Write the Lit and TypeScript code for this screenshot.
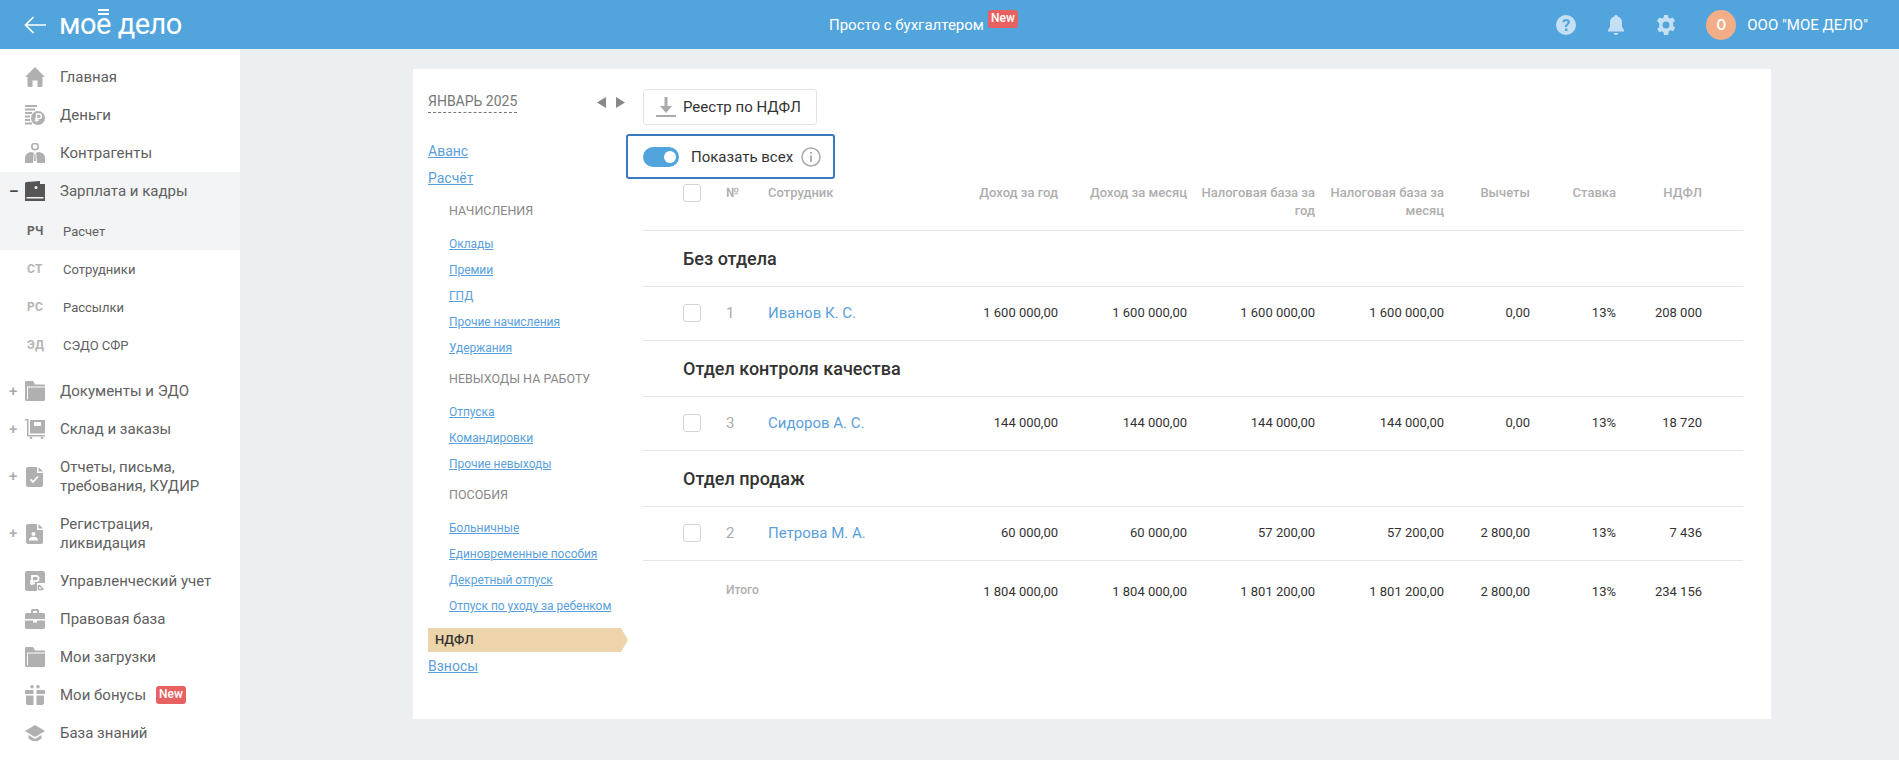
import { LitElement, html, css, svg } from 'lit';
import { customElement } from 'lit/decorators.js';

const ICONS: Record<string, unknown> = {
  home: svg`<path d="M10 0 L20 10 H17.5 V18.5 Q17.5 20 16 20 H12.5 V13.5 H7.5 V20 H4 Q2.5 20 2.5 18.5 V10 H0 Z"/>`,
  money: svg`<path d="M0 0h12v2H0zM0 3.5h10v2H0zM0 7h7v2H0zM0 10.5h5v2H0zM0 14h5v2H0zM0 17.5h7v2H0z"/><circle cx="13" cy="13" r="7"/><path d="M11.5 17v-8h2.6a2.2 2.2 0 0 1 0 4.500h-4M9.700 15.300h4" fill="none" stroke="#fff" stroke-width="1.4"/>`,
  person: svg`<circle cx="10" cy="3.600" r="3.200" fill="none" stroke="currentColor" stroke-width="1.600"/><path d="M0 20v-5q0-5 6-6l4 1 4-1q6 1 6 6v5z"/><path d="M8.800 10h2.400l.8 10H8z" fill="#fff"/><path d="M9.500 11h1l.4 7h-1.800z"/>`,
  wallet: svg`<path d="M1.500 1 L15 0 V3 H20 V20 H0 V2.500 Q0 1 1.500 1z M1.500 16v1.500h17V16z" fill-rule="evenodd"/><circle cx="11" cy="6.500" r="1.500" fill="#f3f4f5"/>`,
  folder: svg`<path d="M1 0 H8 L10 3.500 H19 Q20 3.500 20 4.500 V18.500 Q20 20 18.500 20 H1.500 Q0 20 0 18.500 V1 Q0 0 1 0z M2 5.500 V18.300 H3 V6.500 H20 V5.500z" fill-rule="evenodd"/>`,
  cart: svg`<path d="M0 0h3.500v16H20v1.500H2V1.500H0z"/><path d="M5 1h15v13.500H5zM9 3v4h7V3z" fill-rule="evenodd"/><circle cx="6" cy="19" r="1.300"/><circle cx="17" cy="19" r="1.300"/>`,
  doccheck: svg`<path d="M3 0 H12 V6 H18 V18 Q18 20 16 20 H3 Q1 20 1 18 V2 Q1 0 3 0z M13.500 0 L18 4.500 H13.500z" fill-rule="evenodd"/><path d="M5.500 12.500l2.500 2.500 5-5.500" fill="none" stroke="#fff" stroke-width="1.800"/>`,
  docperson: svg`<path d="M3 0 H12 V6 H18 V18 Q18 20 16 20 H3 Q1 20 1 18 V2 Q1 0 3 0z M13.500 0 L18 4.500 H13.500z" fill-rule="evenodd"/><circle cx="8.500" cy="10" r="2" fill="#fff"/><path d="M4 16.500q0-3.800 4.500-3.800t4.500 3.800z" fill="#fff"/>`,
  ruble: svg`<path d="M2 0 H18 Q20 0 20 2 V20 H2 Q0 20 0 18 V2 Q0 0 2 0z"/><path d="M7 14V5h4a2.500 2.500 0 0 1 0 5.200H5M5 12.300h5" fill="none" stroke="#fff" stroke-width="1.800"/><path d="M12 12h8v8h-8z" fill="#fff"/><path d="M14 13.500h4.500V18M18 18 L13.500 13.500" transform="rotate(180 16 16)" fill="none" stroke="#b0b0b0" stroke-width="1.500"/>`,
  case: svg`<path d="M6 4V1.500Q6 0 7.500 0h5Q14 0 14 1.500V4h4.500Q20 4 20 5.500V10H0V5.500Q0 4 1.500 4zM8 2v2h4V2z" fill-rule="evenodd"/><path d="M0 11.500h8v2h4v-2h8v7q0 1.500-1.500 1.500h-17Q0 20 0 18.500z"/>`,
  gift: svg`<circle cx="7" cy="1.800" r="1.800"/><circle cx="13" cy="1.800" r="1.800"/><path d="M1 5h7.500v4H0V6q0-1 1-1zM11.500 5H19q1 0 1 1v3h-8.500zM1 10.500h7.500V20H3q-2 0-2-2zM11.500 10.500H19V18q0 2-2 2h-5.500z"/>`,
  cap: svg`<path d="M10 2 L20 8 L10 14 L0 8z"/><path d="M3.500 12 L10 16 L16.500 12 V15.500 Q10 21 3.500 15.500z"/>`,
};

const MENU_TOP = [
  { icon: 'home', label: 'Главная' },
  { icon: 'money', label: 'Деньги' },
  { icon: 'person', label: 'Контрагенты' },
];
const MENU_BOTTOM = [
  { icon: 'folder', label: 'Документы и ЭДО', mark: '+' },
  { icon: 'cart', label: 'Склад и заказы', mark: '+' },
  { icon: 'doccheck', label: 'Отчеты, письма, требования, КУДИР', mark: '+', tall: true },
  { icon: 'docperson', label: 'Регистрация, ликвидация', mark: '+', tall: true },
  { icon: 'ruble', label: 'Управленческий учет' },
  { icon: 'case', label: 'Правовая база' },
  { icon: 'folder', label: 'Мои загрузки' },
  { icon: 'gift', label: 'Мои бонусы', badge: true },
  { icon: 'cap', label: 'База знаний' },
];
const SUBMENU = [
  { abbr: 'СТ', label: 'Сотрудники' },
  { abbr: 'РС', label: 'Рассылки' },
  { abbr: 'ЭД', label: 'СЭДО СФР' },
];
const SECTIONS = [
  { title: 'НАЧИСЛЕНИЯ', links: ['Оклады', 'Премии', 'ГПД', 'Прочие начисления', 'Удержания'] },
  { title: 'НЕВЫХОДЫ НА РАБОТУ', links: ['Отпуска', 'Командировки', 'Прочие невыходы'] },
  { title: 'ПОСОБИЯ', links: ['Больничные', 'Единовременные пособия', 'Декретный отпуск', 'Отпуск по уходу за ребенком'] },
];
const COLUMNS = ['Доход за год', 'Доход за месяц', 'Налоговая база за год', 'Налоговая база за месяц', 'Вычеты', 'Ставка', 'НДФЛ'];
const GROUPS = [
  { title: 'Без отдела', num: '1', name: 'Иванов К. С.', values: ['1 600 000,00', '1 600 000,00', '1 600 000,00', '1 600 000,00', '0,00', '13%', '208 000'] },
  { title: 'Отдел контроля качества', num: '3', name: 'Сидоров А. С.', values: ['144 000,00', '144 000,00', '144 000,00', '144 000,00', '0,00', '13%', '18 720'] },
  { title: 'Отдел продаж', num: '2', name: 'Петрова М. А.', values: ['60 000,00', '60 000,00', '57 200,00', '57 200,00', '2 800,00', '13%', '7 436'] },
];
const TOTALS = ['1 804 000,00', '1 804 000,00', '1 801 200,00', '1 801 200,00', '2 800,00', '13%', '234 156'];

@customElement('app-root')
export class AppRoot extends LitElement {
  static styles = css`
    :host {
      display: block;
      height: 760px;
      overflow: hidden;
      background: #ebeff2;
      font-family: Roboto, "Liberation Sans", sans-serif;
      color: #555;
      --cols: 40px 43px 42px 161px 129px 129px 128px 129px 86px 86px 86px 41px;
    }
    a { color: #5a9fdc; text-decoration: underline; }

    .top {
      display: flex;
      align-items: center;
      height: 49px;
      background: #52a5dc;
      color: #fff;
    }
    .top-left {
      display: flex;
      align-items: center;
      width: 829px;
      padding-left: 24px;
      box-sizing: border-box;
    }
    .back { width: 22px; height: 18px; margin-right: 13px; }
    .logo {
      font-size: 29px;
      line-height: 49px;
      height: 49px;
      letter-spacing: -0.5px;
      white-space: nowrap;
    }
    .logo-e { position: relative; }
    .logo-e::before {
      content: '';
      position: absolute;
      left: 2px;
      right: 2px;
      top: 2px;
      height: 2px;
      border-top: 2px solid #fff;
      border-bottom: 2px solid #fff;
    }
    .promo { position: relative; font-size: 15px; color: #fff; }
    .new {
      display: inline-block;
      padding: 0 3px;
      height: 18px;
      line-height: 17px;
      border-radius: 3px;
      background: #e86161;
      color: #fff;
      font-size: 12px;
      font-weight: 500;
    }
    .promo .new { position: absolute; left: 159px; top: -6px; }
    .top-right {
      display: flex;
      align-items: center;
      margin-left: auto;
      padding-right: 31px;
    }
    .top-icon { width: 20px; height: 20px; margin-right: 30px; fill: #c5e0f5; display: block; }
    .avatar {
      width: 30px;
      height: 30px;
      border-radius: 50%;
      background: #f4ae87;
      color: #fff;
      font-size: 14px;
      font-weight: 500;
      display: flex;
      align-items: center;
      justify-content: center;
      margin-right: 11px;
    }
    .company { font-size: 15px; color: #fff; }

    .body { display: flex; height: 711px; }
    .side {
      width: 240px;
      flex: none;
      background: #fff;
      padding-top: 9px;
      box-sizing: border-box;
      font-size: 15px;
      line-height: 19px;
      color: #606060;
      overflow: hidden;
    }
    .item {
      display: flex;
      align-items: center;
      height: 38px;
    }
    .item.tall { height: 57px; }
    .item.active { background: #f3f4f5; height: 40px; padding-bottom: 2px; box-sizing: border-box; }
    .mark {
      width: 25px;
      flex: none;
      padding-left: 9px;
      box-sizing: border-box;
      font-size: 15px;
      font-weight: 500;
      color: #aaa;
    }
    .active .mark { color: #444; font-weight: 700; }
    .icon { width: 20px; height: 20px; flex: none; fill: #b0b0b0; color: #b0b0b0; margin-right: 15px; }
    .active .icon { fill: #555; color: #555; }
    .label { max-width: 175px; }
    .item .new { margin-left: 10px; }
    .sub {
      display: flex;
      align-items: center;
      height: 38px;
      font-size: 13px;
      padding-left: 27px;
    }
    .sub.current { background: #f3f4f5; }
    .abbr { width: 36px; flex: none; font-size: 12px; font-weight: 700; color: #b5b5b5; letter-spacing: 0.3px; }
    .current .abbr { color: #666; }
    .subs { margin-bottom: 8px; }

    .main { flex: 1; padding: 20px 0 0 173px; }
    .card {
      display: flex;
      width: 1358px;
      height: 650px;
      background: #fff;
      box-sizing: border-box;
      padding: 20px 0 0 15px;
    }
    .nav { width: 215px; flex: none; font-size: 14px; line-height: 20px; }
    .month-row {
      display: flex;
      align-items: center;
      justify-content: space-between;
      width: 197px;
      height: 26px;
      margin-bottom: 26px;
    }
    .month { color: #777; border-bottom: 1px dashed #777; line-height: 20px; height: 21px; }
    .arrows { display: flex; gap: 10px; }
    .arrows svg { width: 9px; height: 11px; fill: #888; display: block; }
    .nav-link { display: block; width: max-content; margin-bottom: 7px; }
    .section-title { font-size: 12.5px; color: #888; margin: 12px 0 14px 21px; }
    .nav-link + .section-title { margin-top: 13px; }
    .section-links { display: flex; flex-direction: column; gap: 8px; margin-left: 21px; font-size: 12px; line-height: 18px; letter-spacing: -0.05px; }
    .section-links a { width: max-content; }
    .nav-current {
      width: 200px;
      height: 24px;
      margin: 13px 0 4px;
      padding-left: 7px;
      box-sizing: border-box;
      background: #edd4aa;
      color: #333;
      font-size: 13px;
      font-weight: 500;
      line-height: 23px;
      clip-path: polygon(0 0, 193px 0, 100% 50%, 193px 100%, 0 100%);
    }

    .content { width: 1100px; flex: none; }
    .export {
      display: flex;
      align-items: center;
      width: 174px;
      height: 36px;
      box-sizing: border-box;
      border: 1px solid #e2e2e2;
      border-radius: 3px;
      padding-left: 12px;
      font-size: 15px;
      color: #333;
    }
    .export svg { width: 20px; height: 20px; fill: #aaa; margin-right: 7px; }
    .toggle-box {
      display: flex;
      align-items: center;
      width: 209px;
      height: 45px;
      margin: 9px 0 0 -17px;
      padding-left: 15px;
      box-sizing: border-box;
      border: 2px solid #3a7abd;
      border-radius: 3px;
      font-size: 15px;
      color: #333;
    }
    .toggle {
      width: 36px;
      height: 20px;
      border-radius: 10px;
      background: #52a5dc;
      display: flex;
      align-items: center;
      justify-content: flex-end;
      padding-right: 3px;
      box-sizing: border-box;
      margin-right: 12px;
    }
    .toggle i { width: 12px; height: 12px; border-radius: 50%; background: #fff; }
    .info { width: 20px; height: 20px; margin-left: 8px; }

    .row {
      display: grid;
      grid-template-columns: var(--cols);
      align-items: center;
      border-bottom: 1px solid #e5e5e5;
      box-sizing: border-box;
    }
    .check {
      grid-column: 2;
      width: 18px;
      height: 18px;
      box-sizing: border-box;
      border: 1px solid #d5d5d5;
      border-radius: 3px;
    }
    .head {
      height: 52px;
      align-items: start;
      padding-top: 5px;
      font-size: 13px;
      font-weight: 500;
      line-height: 18px;
      color: #aeaeae;
    }
    .right { text-align: right; }
    .head .right { padding-left: 12px; }
    .group {
      height: 56px;
      display: flex;
      align-items: center;
      padding-left: 40px;
      border-bottom: 1px solid #e5e5e5;
      box-sizing: border-box;
      font-size: 18px;
      font-weight: 500;
      color: #333;
    }
    .data { height: 54px; padding-bottom: 2px; font-size: 13px; color: #333; }
    .num { font-size: 15px; color: #aaa; }
    .name { font-size: 15px; color: #5a9fdc; }
    .total { height: 60px; align-items: start; font-size: 13px; color: #333; border-bottom: none; padding-top: 23px; }
    .total-label { grid-column: 3 / 5; font-size: 12px; font-weight: 500; color: #aeaeae; margin-top: -1px; }
  `;

  private renderItem(m: { icon: string; label: string; mark?: string; tall?: boolean; badge?: boolean }) {
    return html`
      <div class="item ${m.tall ? 'tall' : ''}">
        <span class="mark">${m.mark ?? ''}</span>
        <svg class="icon" viewBox="0 0 20 20">${ICONS[m.icon]}</svg>
        <span class="label">${m.label}</span>
        ${m.badge ? html`<span class="new">New</span>` : ''}
      </div>
    `;
  }

  private renderTop() {
    return html`
      <header class="top">
        <div class="top-left">
          <svg class="back" viewBox="0 0 22 18" fill="none" stroke="#fff" stroke-width="1.6"><path d="M22 9H1.5M9.5 1 1.5 9l8 8"/></svg>
          <div class="logo">мо<span class="logo-e">е</span> дело</div>
        </div>
        <div class="promo">Просто с бухгалтером<span class="new">New</span></div>
        <div class="top-right">
          <svg class="top-icon" viewBox="0 0 20 20"><path fill-rule="evenodd" d="M10 0a10 10 0 1 1 0 20 10 10 0 0 1 0-20zM9 13.500v2.500h2.400v-2.500zM10.200 4C8 4 6.500 5.200 6.300 7.300h2.300c.1-.9.700-1.400 1.500-1.400s1.400.5 1.400 1.300c0 1.600-2.700 1.800-2.700 4.900h2.300c0-2.400 2.800-2.600 2.800-5.100C13.900 5.200 12.400 4 10.200 4z"/></svg>
          <svg class="top-icon" viewBox="0 0 20 20"><path d="M10 0c1 0 1.500.6 1.600 1.400C14.500 2.200 16 4.500 16 7.500V12l2 3v1.500H2V15l2-3V7.500c0-3 1.500-5.300 4.400-6.100C8.500.6 9 0 10 0zM7.500 18h5c-.3 1.200-1.300 2-2.500 2s-2.200-.8-2.500-2z"/></svg>
          <svg class="top-icon" viewBox="0 0 20 20"><path fill-rule="evenodd" d="M8 0h4l.5 2.800 1.600.8L16.700 2.500l2.300 3.300-2.100 1.900.2 1.300.2 1-.2 1 2.100 1.800-2 3.500-2.700-1-1.600 1L12 20H8l-.5-2.700-1.600-1-2.700 1-2-3.500 2.100-1.800-.2-1 .2-2.300L1 5.800l2.300-3.300 2.600 1.100 1.600-.8zM10 6.500a3.500 3.500 0 1 0 0 7 3.500 3.500 0 0 0 0-7z"/></svg>
          <div class="avatar">О</div>
          <div class="company">ООО "МОЕ ДЕЛО"</div>
        </div>
      </header>
    `;
  }

  private renderSide() {
    return html`
      <aside class="side">
        ${MENU_TOP.map((m) => this.renderItem(m))}
        <div class="item active">
          <span class="mark">–</span>
          <svg class="icon" viewBox="0 0 20 20">${ICONS.wallet}</svg>
          <span class="label">Зарплата и кадры</span>
        </div>
        <div class="subs">
          <div class="sub current"><span class="abbr">РЧ</span>Расчет</div>
          ${SUBMENU.map((s) => html`<div class="sub"><span class="abbr">${s.abbr}</span>${s.label}</div>`)}
        </div>
        ${MENU_BOTTOM.map((m) => this.renderItem(m))}
      </aside>
    `;
  }

  private renderNav() {
    return html`
      <nav class="nav">
        <div class="month-row">
          <span class="month">ЯНВАРЬ 2025</span>
          <span class="arrows">
            <svg viewBox="0 0 9 11"><path d="M9 0v11L0 5.500z"/></svg>
            <svg viewBox="0 0 9 11"><path d="M0 0v11l9-5.500z"/></svg>
          </span>
        </div>
        <a class="nav-link">Аванс</a>
        <a class="nav-link">Расчёт</a>
        ${SECTIONS.map((s) => html`
          <div class="section-title">${s.title}</div>
          <div class="section-links">${s.links.map((l) => html`<a>${l}</a>`)}</div>
        `)}
        <div class="nav-current">НДФЛ</div>
        <a class="nav-link">Взносы</a>
      </nav>
    `;
  }

  private renderTable() {
    return html`
      <div class="row head">
        <span class="check"></span>
        <div>№</div>
        <div>Сотрудник</div>
        ${COLUMNS.map((c) => html`<div class="right">${c}</div>`)}
      </div>
      ${GROUPS.map((g) => html`
        <div class="group">${g.title}</div>
        <div class="row data">
          <span class="check"></span>
          <div class="num">${g.num}</div>
          <div class="name">${g.name}</div>
          ${g.values.map((v) => html`<div class="right">${v}</div>`)}
        </div>
      `)}
      <div class="row total">
        <div class="total-label">Итого</div>
        ${TOTALS.map((v) => html`<div class="right">${v}</div>`)}
      </div>
    `;
  }

  render() {
    return html`
      ${this.renderTop()}
      <div class="body">
        ${this.renderSide()}
        <main class="main">
          <section class="card">
            ${this.renderNav()}
            <div class="content">
              <div class="export">
                <svg viewBox="0 0 20 20"><path d="M8.500 0h3v9H16l-6 7-6-7h4.500zM0 18h20v2H0z"/></svg>
                Реестр по НДФЛ
              </div>
              <div class="toggle-box">
                <span class="toggle"><i></i></span>
                Показать всех
                <svg class="info" viewBox="0 0 20 20"><circle cx="10" cy="10" r="9" fill="none" stroke="#aaa" stroke-width="1.500"/><path d="M9.200 8.500h1.600V15H9.200zM9.200 5h1.600v1.800H9.200z" fill="#999"/></svg>
              </div>
              ${this.renderTable()}
            </div>
          </section>
        </main>
      </div>
    `;
  }
}
